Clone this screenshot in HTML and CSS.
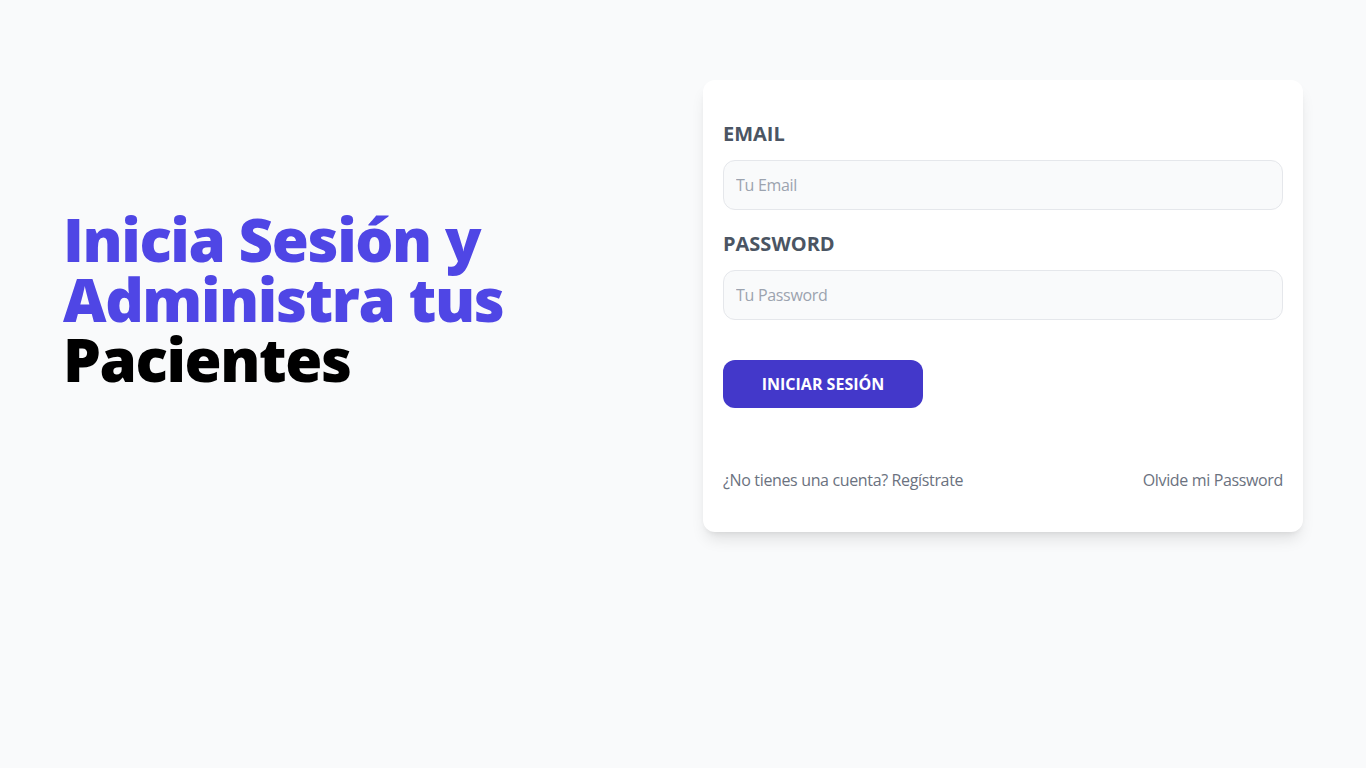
FILE: index.html
```html
<!DOCTYPE html>
<html lang="es">
<head>
<meta charset="utf-8">
<title>APV - Iniciar Sesión</title>
<link rel="stylesheet" href="styles.css">
</head>
<body>
<main class="container">
  <div class="intro">
    <h1 class="title">Inicia Sesión y Administra tus <span class="dark">Pacientes</span></h1>
  </div>
  <div class="card">
    <form class="form">
      <div class="field">
        <label class="label" for="email">Email</label>
        <input class="input" id="email" type="email" placeholder="Tu Email">
      </div>
      <div class="field">
        <label class="label" for="password">Password</label>
        <input class="input" id="password" type="password" placeholder="Tu Password">
      </div>
      <button class="btn" type="button">Iniciar Sesión</button>
    </form>
    <nav class="links">
      <a href="#" class="link">¿No tienes una cuenta? Regístrate</a>
      <a href="#" class="link">Olvide mi Password</a>
    </nav>
  </div>
</main>
</body>
</html>
```

FILE: styles.css
```css
* { box-sizing: border-box; }
html, body { margin: 0; padding: 0; }
body {
  background: #f9fafb;
  font-family: "Open Sans", "Noto Sans", sans-serif;
  color: #111827;
}
.container {
  max-width: 1280px;
  margin: 60px auto 0;
  padding: 20px;
  display: grid;
  grid-template-columns: 1fr 1fr;
  gap: 40px;
  align-items: center;
}
.intro { padding-bottom: 14px; }
.title {
  margin: 0;
  font-size: 60px;
  line-height: 60px;
  font-weight: 800;
  letter-spacing: -1.4px;
  color: #4f46e5;
}
.dark { color: #000; }
.card {
  background: #fff;
  border-radius: 12px;
  padding: 40px 20px;
  box-shadow: 0 10px 15px -3px rgba(0,0,0,0.1), 0 4px 6px -4px rgba(0,0,0,0.1);
}
.form {
  margin: 0;
  display: flex;
  flex-direction: column;
  gap: 20px;
}
.label {
  display: block;
  text-transform: uppercase;
  font-size: 20px;
  line-height: 28px;
  font-weight: 700;
  color: #4b5563;
}
.input {
  display: block;
  width: 100%;
  margin-top: 12px;
  padding: 12px;
  font: inherit;
  font-size: 16px;
  line-height: 24px;
  height: 50px;
  letter-spacing: -0.3px;
  border: 1px solid #e5e7eb;
  border-radius: 12px;
  background: #f9fafb;
  color: #111827;
}
.input::placeholder { color: #9ca3af; }
.btn {
  display: block;
  margin-top: 20px;
  width: 200px;
  height: 48px;
  padding: 12px 0;
  border: 0;
  border-radius: 12px;
  background: #4338ca;
  color: #fff;
  font: inherit;
  font-size: 16px;
  line-height: 24px;
  font-weight: 700;
  text-transform: uppercase;
}
.links {
  margin-top: 60px;
  display: flex;
  justify-content: space-between;
}
.link {
  font-size: 16px;
  line-height: 24px;
  letter-spacing: -0.35px;
  color: #6b7280;
  text-decoration: none;
}
```
